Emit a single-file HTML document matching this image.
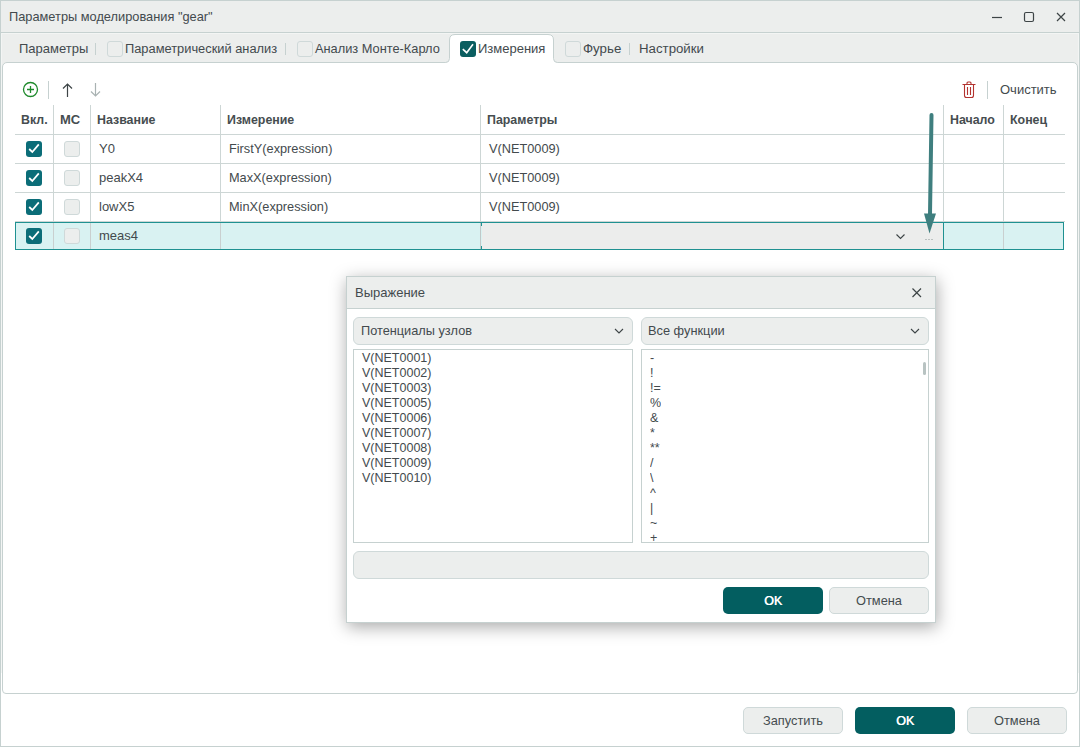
<!DOCTYPE html>
<html><head><meta charset="utf-8">
<style>
*{box-sizing:border-box;margin:0;padding:0}
html,body{width:1080px;height:747px;overflow:hidden;background:#fff}
body{font-family:"Liberation Sans",sans-serif;font-size:13px;color:#434a4d;position:relative}
.a{position:absolute}
.t{position:absolute;white-space:nowrap;line-height:15px}
.win{left:0;top:0;width:1080px;height:747px;border:1px solid #c6d1d0;background:#fff}
.titlebar{left:0;top:0;width:1080px;height:33px;background:#eceeed;border:1px solid #c6d1d0}
.tabbar{left:0;top:33px;width:1080px;height:29px;background:#eceeed;border-left:1px solid #c6d1d0;border-right:1px solid #c6d1d0}
.panel{left:2px;top:62px;width:1076px;height:632px;background:#fff;border:1px solid #c6d1d0;border-radius:5px 5px 4px 4px}
.sep{position:absolute;width:1px;background:#c6d1d0}
.cb{position:absolute;width:16px;height:16px;border-radius:3px;background:#eceeed;border:1px solid #cfd9d9}
.cbc{position:absolute;width:16px;height:16px;border-radius:3px;background:#0b6d78}
.cbc svg{position:absolute;left:0;top:0}
.hl{position:absolute;height:1px;background:#cdd6d5}
.vl{position:absolute;width:1px;background:#cdd6d5}
.h{font-weight:bold;font-size:12.4px;color:#464d50}
.btn{position:absolute;border-radius:5px;background:#eceeed;border:1px solid #cfd9d9;text-align:center;line-height:26px;color:#454c4f;font-size:12.8px}
.btnp{position:absolute;border-radius:5px;background:#035e60;text-align:center;line-height:28px;color:#fff;font-weight:normal;font-size:12.5px;text-shadow:0.45px 0 0 #fff}
.dlg{left:346px;top:276px;width:590px;height:347px;background:#fff;border:1px solid #c6d1d0;box-shadow:1px 4px 16px rgba(0,0,0,0.34)}
.dtitle{left:347px;top:277px;width:588px;height:32px;background:#eceeed;border-bottom:1px solid #c6d1d0}
.combo{position:absolute;height:28px;border-radius:6px;background:#eceeed;border:1px solid #cfd9d9}
.list{position:absolute;background:#fff;border:1px solid #c6d1d0}
</style></head><body>
<div class="a win"></div>
<div class="a titlebar"></div>
<div class="t" style="left:9px;top:9px;font-size:12.8px">Параметры моделирования "gear"</div>
<svg class="a" style="left:985px;top:5px" width="90" height="24">
  <line x1="7" y1="12.5" x2="17" y2="12.5" stroke="#3d4446" stroke-width="1.2"/>
  <rect x="39.5" y="7.5" width="9" height="9" rx="1.5" fill="none" stroke="#3d4446" stroke-width="1.2"/>
  <path d="M72 8 L80 16 M80 8 L72 16" stroke="#3d4446" stroke-width="1.2"/>
</svg>
<div class="a tabbar"></div>
<div class="a" style="left:2px;top:62px;width:1076px;height:5px;background:#eceeed"></div>
<div class="a" style="left:1px;top:33px;width:1078px;height:1px;background:#f3f5f4"></div>
<div class="a" style="left:1px;top:33px;width:1px;height:640px;background:#f3f5f4"></div>
<div class="a" style="left:1078px;top:33px;width:1px;height:640px;background:#f3f5f4"></div>
<div class="a panel"></div>
<!-- active tab -->
<svg class="a" style="left:440px;top:30px" width="125" height="36">
  <path d="M0 32.5 H5.5 Q9.5 32.5 9.5 28.5 V10 Q9.5 4.5 15 4.5 H108 Q113.5 4.5 113.5 10 V28.5 Q113.5 32.5 117.5 32.5 H125 V36 H0 Z" fill="#fff"/>
  <path d="M0 32.5 H5.5 Q9.5 32.5 9.5 28.5 V10 Q9.5 4.5 15 4.5 H108 Q113.5 4.5 113.5 10 V28.5 Q113.5 32.5 117.5 32.5 H125" fill="none" stroke="#c6d1d0" stroke-width="1"/>
</svg>

<!-- tabs -->
<div class="t" style="left:19px;top:41px">Параметры</div>
<div class="sep" style="left:95px;top:43px;height:12px"></div>
<div class="cb" style="left:107px;top:41px"></div>
<div class="t" style="left:125px;top:41px;font-size:12.85px">Параметрический анализ</div>
<div class="sep" style="left:285px;top:43px;height:12px"></div>
<div class="cb" style="left:297px;top:41px"></div>
<div class="t" style="left:315px;top:41px;font-size:12.8px">Анализ Монте-Карло</div>
<div class="cbc" style="left:460px;top:41px;background:#0b5e60"><svg width="16" height="16"><path d="M2.8 8.1 L6.7 11.7 L13 3.3" fill="none" stroke="#fff" stroke-width="1.6"/></svg></div>
<div class="t" style="left:478px;top:41px">Измерения</div>
<div class="cb" style="left:565px;top:41px"></div>
<div class="t" style="left:583px;top:41px;font-size:13.3px">Фурье</div>
<div class="sep" style="left:629px;top:43px;height:12px"></div>
<div class="t" style="left:639px;top:41px;font-size:13.25px">Настройки</div>

<!-- toolbar -->
<svg class="a" style="left:20px;top:79px" width="90" height="22">
  <circle cx="10.5" cy="10.5" r="7" fill="none" stroke="#1f8a2c" stroke-width="1.3"/>
  <path d="M10.5 7 V14 M7 10.5 H14" stroke="#1f8a2c" stroke-width="1.3"/>
  <line x1="28.5" y1="2" x2="28.5" y2="20" stroke="#c6d1d0" stroke-width="1"/>
  <path d="M47.5 5 V18 M43 9.5 L47.5 5 L52 9.5" fill="none" stroke="#3d4446" stroke-width="1.2"/>
  <path d="M75.5 4 V17 M71 12.5 L75.5 17 L80 12.5" fill="none" stroke="#a9b2b2" stroke-width="1.2"/>
</svg>
<svg class="a" style="left:960px;top:79px" width="20" height="22">
  <path d="M2.5 5.5 H15.5 M7 5.5 V4 Q7 3 8 3 H10 Q11 3 11 4 V5.5 M4.5 6 V16.5 Q4.5 18.5 6.5 18.5 H11.5 Q13.5 18.5 13.5 16.5 V6 M7.5 8 V16 M10.5 8 V16" fill="none" stroke="#b3332f" stroke-width="1.1"/>
</svg>
<div class="sep" style="left:987px;top:81px;height:18px"></div>
<div class="t" style="left:1000px;top:82px">Очистить</div>

<!-- table -->
<div class="hl" style="left:15px;top:134px;width:1050px"></div>
<div class="hl" style="left:15px;top:163px;width:1050px"></div>
<div class="hl" style="left:15px;top:192px;width:1050px"></div>
<div class="hl" style="left:15px;top:221px;width:1050px"></div>
<div class="vl" style="left:53px;top:105px;height:116px"></div>
<div class="vl" style="left:90px;top:105px;height:116px"></div>
<div class="vl" style="left:220px;top:105px;height:116px"></div>
<div class="vl" style="left:480px;top:105px;height:116px"></div>
<div class="vl" style="left:943px;top:105px;height:116px"></div>
<div class="vl" style="left:1003px;top:105px;height:116px"></div>

<div class="t h" style="left:21px;top:113px">Вкл.</div>
<div class="t h" style="left:60px;top:112px;font-size:13px">МС</div>
<div class="t h" style="left:97px;top:113px">Название</div>
<div class="t h" style="left:227px;top:113px">Измерение</div>
<div class="t h" style="left:487px;top:113px">Параметры</div>
<div class="t h" style="left:950px;top:113px">Начало</div>
<div class="t h" style="left:1010px;top:113px">Конец</div>

<!-- rows -->
<div class="cbc" style="left:26px;top:141px"><svg width="16" height="16"><path d="M3.2 8 L6.3 11 L12.8 3.4" fill="none" stroke="#fff" stroke-width="1.75"/></svg></div>
<div class="cb" style="left:64px;top:141px"></div>
<div class="t" style="left:99px;top:141px">Y0</div>
<div class="t" style="left:229px;top:141px;font-size:12.75px">FirstY(expression)</div>
<div class="t" style="left:489px;top:141px;font-size:12.75px">V(NET0009)</div>

<div class="cbc" style="left:26px;top:170px"><svg width="16" height="16"><path d="M3.2 8 L6.3 11 L12.8 3.4" fill="none" stroke="#fff" stroke-width="1.75"/></svg></div>
<div class="cb" style="left:64px;top:170px"></div>
<div class="t" style="left:99px;top:170px">peakX4</div>
<div class="t" style="left:229px;top:170px;font-size:12.75px">MaxX(expression)</div>
<div class="t" style="left:489px;top:170px;font-size:12.75px">V(NET0009)</div>

<div class="cbc" style="left:26px;top:199px"><svg width="16" height="16"><path d="M3.2 8 L6.3 11 L12.8 3.4" fill="none" stroke="#fff" stroke-width="1.75"/></svg></div>
<div class="cb" style="left:64px;top:199px"></div>
<div class="t" style="left:99px;top:199px">lowX5</div>
<div class="t" style="left:229px;top:199px;font-size:12.75px">MinX(expression)</div>
<div class="t" style="left:489px;top:199px;font-size:12.75px">V(NET0009)</div>

<!-- selected row -->
<div class="a" style="left:15px;top:222px;width:1049px;height:28px;background:#d9f2f2;border:1px solid #1f9191;border-width:1.5px"></div>
<div class="a" style="left:482px;top:223px;width:461px;height:26px;background:#ecedec"></div>
<div class="a" style="left:943px;top:223px;width:1px;height:26px;background:#1f9191"></div>
<div class="a" style="left:480px;top:223px;width:1px;height:26px;background:#c0c8c8"></div><div class="a" style="left:481px;top:223px;width:1px;height:3px;background:#1f9191"></div><div class="a" style="left:481px;top:246px;width:1px;height:3px;background:#1f9191"></div>
<div class="vl" style="left:53px;top:223px;height:26px;background:#c9cfcf"></div>
<div class="vl" style="left:90px;top:223px;height:26px;background:#c9cfcf"></div>
<div class="vl" style="left:220px;top:223px;height:26px;background:#c9cfcf"></div>
<div class="vl" style="left:1003px;top:223px;height:26px;background:#c9cfcf"></div>
<div class="cbc" style="left:26px;top:228px"><svg width="16" height="16"><path d="M3.2 8 L6.3 11 L12.8 3.4" fill="none" stroke="#fff" stroke-width="1.75"/></svg></div>
<div class="cb" style="left:64px;top:228px"></div>
<div class="t" style="left:99px;top:228px">meas4</div>
<svg class="a" style="left:894px;top:230px" width="44" height="14">
  <path d="M2.5 4.5 L6.5 8.5 L10.5 4.5" fill="none" stroke="#3d4446" stroke-width="1.1"/>
  <rect x="31.5" y="9" width="1" height="1" fill="#8a9494"/><rect x="34.5" y="9" width="1" height="1" fill="#8a9494"/><rect x="37.5" y="9" width="1" height="1" fill="#8a9494"/>
</svg>

<!-- annotation arrow -->
<svg class="a" style="left:915px;top:108px" width="30" height="130">
  <path d="M16.5 7 L15 106" stroke="#3f7f7f" stroke-width="4" stroke-linecap="round"/>
  <path d="M9 105.5 L21 105.5 L14.5 125.5 Z" fill="#3f7f7f"/>
</svg>

<!-- dialog -->
<div class="a dlg"></div>
<div class="a dtitle"></div>
<div class="t" style="left:355px;top:285px">Выражение</div>
<svg class="a" style="left:908px;top:284px" width="18" height="18">
  <path d="M4.5 4.5 L13 13 M13 4.5 L4.5 13" stroke="#3d4446" stroke-width="1.2"/>
</svg>
<div class="combo" style="left:353px;top:317px;width:280px"></div>
<div class="t" style="left:361px;top:323px;font-size:12.75px">Потенциалы узлов</div>
<svg class="a" style="left:611px;top:324px" width="16" height="14"><path d="M4 5 L8 9 L12 5" fill="none" stroke="#3d4446" stroke-width="1.1"/></svg>
<div class="combo" style="left:641px;top:317px;width:288px"></div>
<div class="t" style="left:648px;top:323px;font-size:12.8px">Все функции</div>
<svg class="a" style="left:907px;top:324px" width="16" height="14"><path d="M4 5 L8 9 L12 5" fill="none" stroke="#3d4446" stroke-width="1.1"/></svg>

<div class="list" style="left:353px;top:349px;width:280px;height:194px"></div>
<div class="t" style="left:362px;top:351px;line-height:15px;font-size:12.5px">V(NET0001)<br>V(NET0002)<br>V(NET0003)<br>V(NET0005)<br>V(NET0006)<br>V(NET0007)<br>V(NET0008)<br>V(NET0009)<br>V(NET0010)</div>
<div class="list" style="left:641px;top:349px;width:288px;height:194px;overflow:hidden"></div>
<div class="t" style="left:650px;top:351px;line-height:15px;height:191px;overflow:hidden;font-size:12.5px">-<br>!<br>!=<br>%<br>&amp;<br>*<br>**<br>/<br>\<br>^<br>|<br>~<br>+</div>
<div class="a" style="left:923px;top:362px;width:3px;height:13px;border-radius:2px;background:#b8c3c2"></div>

<div class="combo" style="left:353px;top:551px;width:576px"></div>
<div class="btnp" style="left:723px;top:587px;width:100px;height:27px">OK</div>
<div class="btn" style="left:829px;top:587px;width:100px;height:27px">Отмена</div>

<!-- bottom buttons -->
<div class="btn" style="left:743px;top:707px;width:100px;height:27px">Запустить</div>
<div class="btnp" style="left:855px;top:707px;width:100px;height:27px">OK</div>
<div class="btn" style="left:967px;top:707px;width:100px;height:27px">Отмена</div>
</body></html>
